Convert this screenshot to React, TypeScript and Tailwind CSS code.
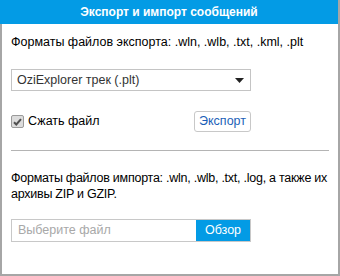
import React, { useState } from 'react';

// Диалог экспорта/импорта сообщений
const App: React.FC = () => {
  const [compress, setCompress] = useState(true);

  return (
    <div className="w-[340px] h-[276px] bg-white border-r-2 border-[#a6a6a6] font-['Liberation_Sans',Arial,sans-serif] text-[12.5px] text-black flex flex-col">
      {/* Заголовок */}
      <div className="h-[24px] bg-[#039be5] text-white font-bold text-[12px] flex items-center justify-center">
        Экспорт и импорт сообщений
      </div>

      <div className="flex-1 border-l-2 border-b-2 border-[#a6a6a6] px-[9px] flex flex-col">
        {/* Экспорт */}
        <p className="mt-[10px] leading-[16px]">Форматы файлов экспорта: .wln, .wlb, .txt, .kml, .plt</p>

        <div className="mt-[19px] w-[240px] h-[22px] border border-[#c4c4c4] flex items-center justify-between pl-[5px] pr-[6px] text-[#333]">
          <span>OziExplorer трек (.plt)</span>
          <svg width="9" height="5" viewBox="0 0 9 5">
            <path d="M0 0h9L4.5 5z" fill="#222" />
          </svg>
        </div>

        <div className="mt-[20px] w-[240px] flex items-center justify-between">
          <label className="flex items-center gap-[4px] cursor-pointer" onClick={() => setCompress(!compress)}>
            <span className="w-[13px] h-[13px] border border-[#9a9a9a] rounded-[2px] bg-[#dcdcdc] flex items-center justify-center">
              {compress && (
                <svg width="9" height="8" viewBox="0 0 9 8">
                  <path d="M1 4.2l2.3 2.3L8 1.2" stroke="#505050" strokeWidth="2" fill="none" />
                </svg>
              )}
            </span>
            <span>Сжать файл</span>
          </label>
          <button className="w-[57px] h-[21px] border border-[#c8c8c8] rounded-[3px] bg-white text-[#1c5fb8]">
            Экспорт
          </button>
        </div>

        <div className="mt-[18px] h-px bg-[#b4b4b4]" />

        {/* Импорт */}
        <p className="mt-[19px] leading-[16px] tracking-[-0.25px] whitespace-nowrap">
          Форматы файлов импорта: .wln, .wlb, .txt, .log, а также их
          <br />
          архивы ZIP и GZIP.
        </p>

        <div className="mt-[17px] w-[240px] h-[23px] border border-[#c8c8c8] flex">
          <span className="flex-1 flex items-center pl-[6px] text-[#a8a8a8]">Выберите файл</span>
          <button className="w-[54px] bg-[#039be5] text-white">Обзор</button>
        </div>
      </div>
    </div>
  );
};

export default App;
